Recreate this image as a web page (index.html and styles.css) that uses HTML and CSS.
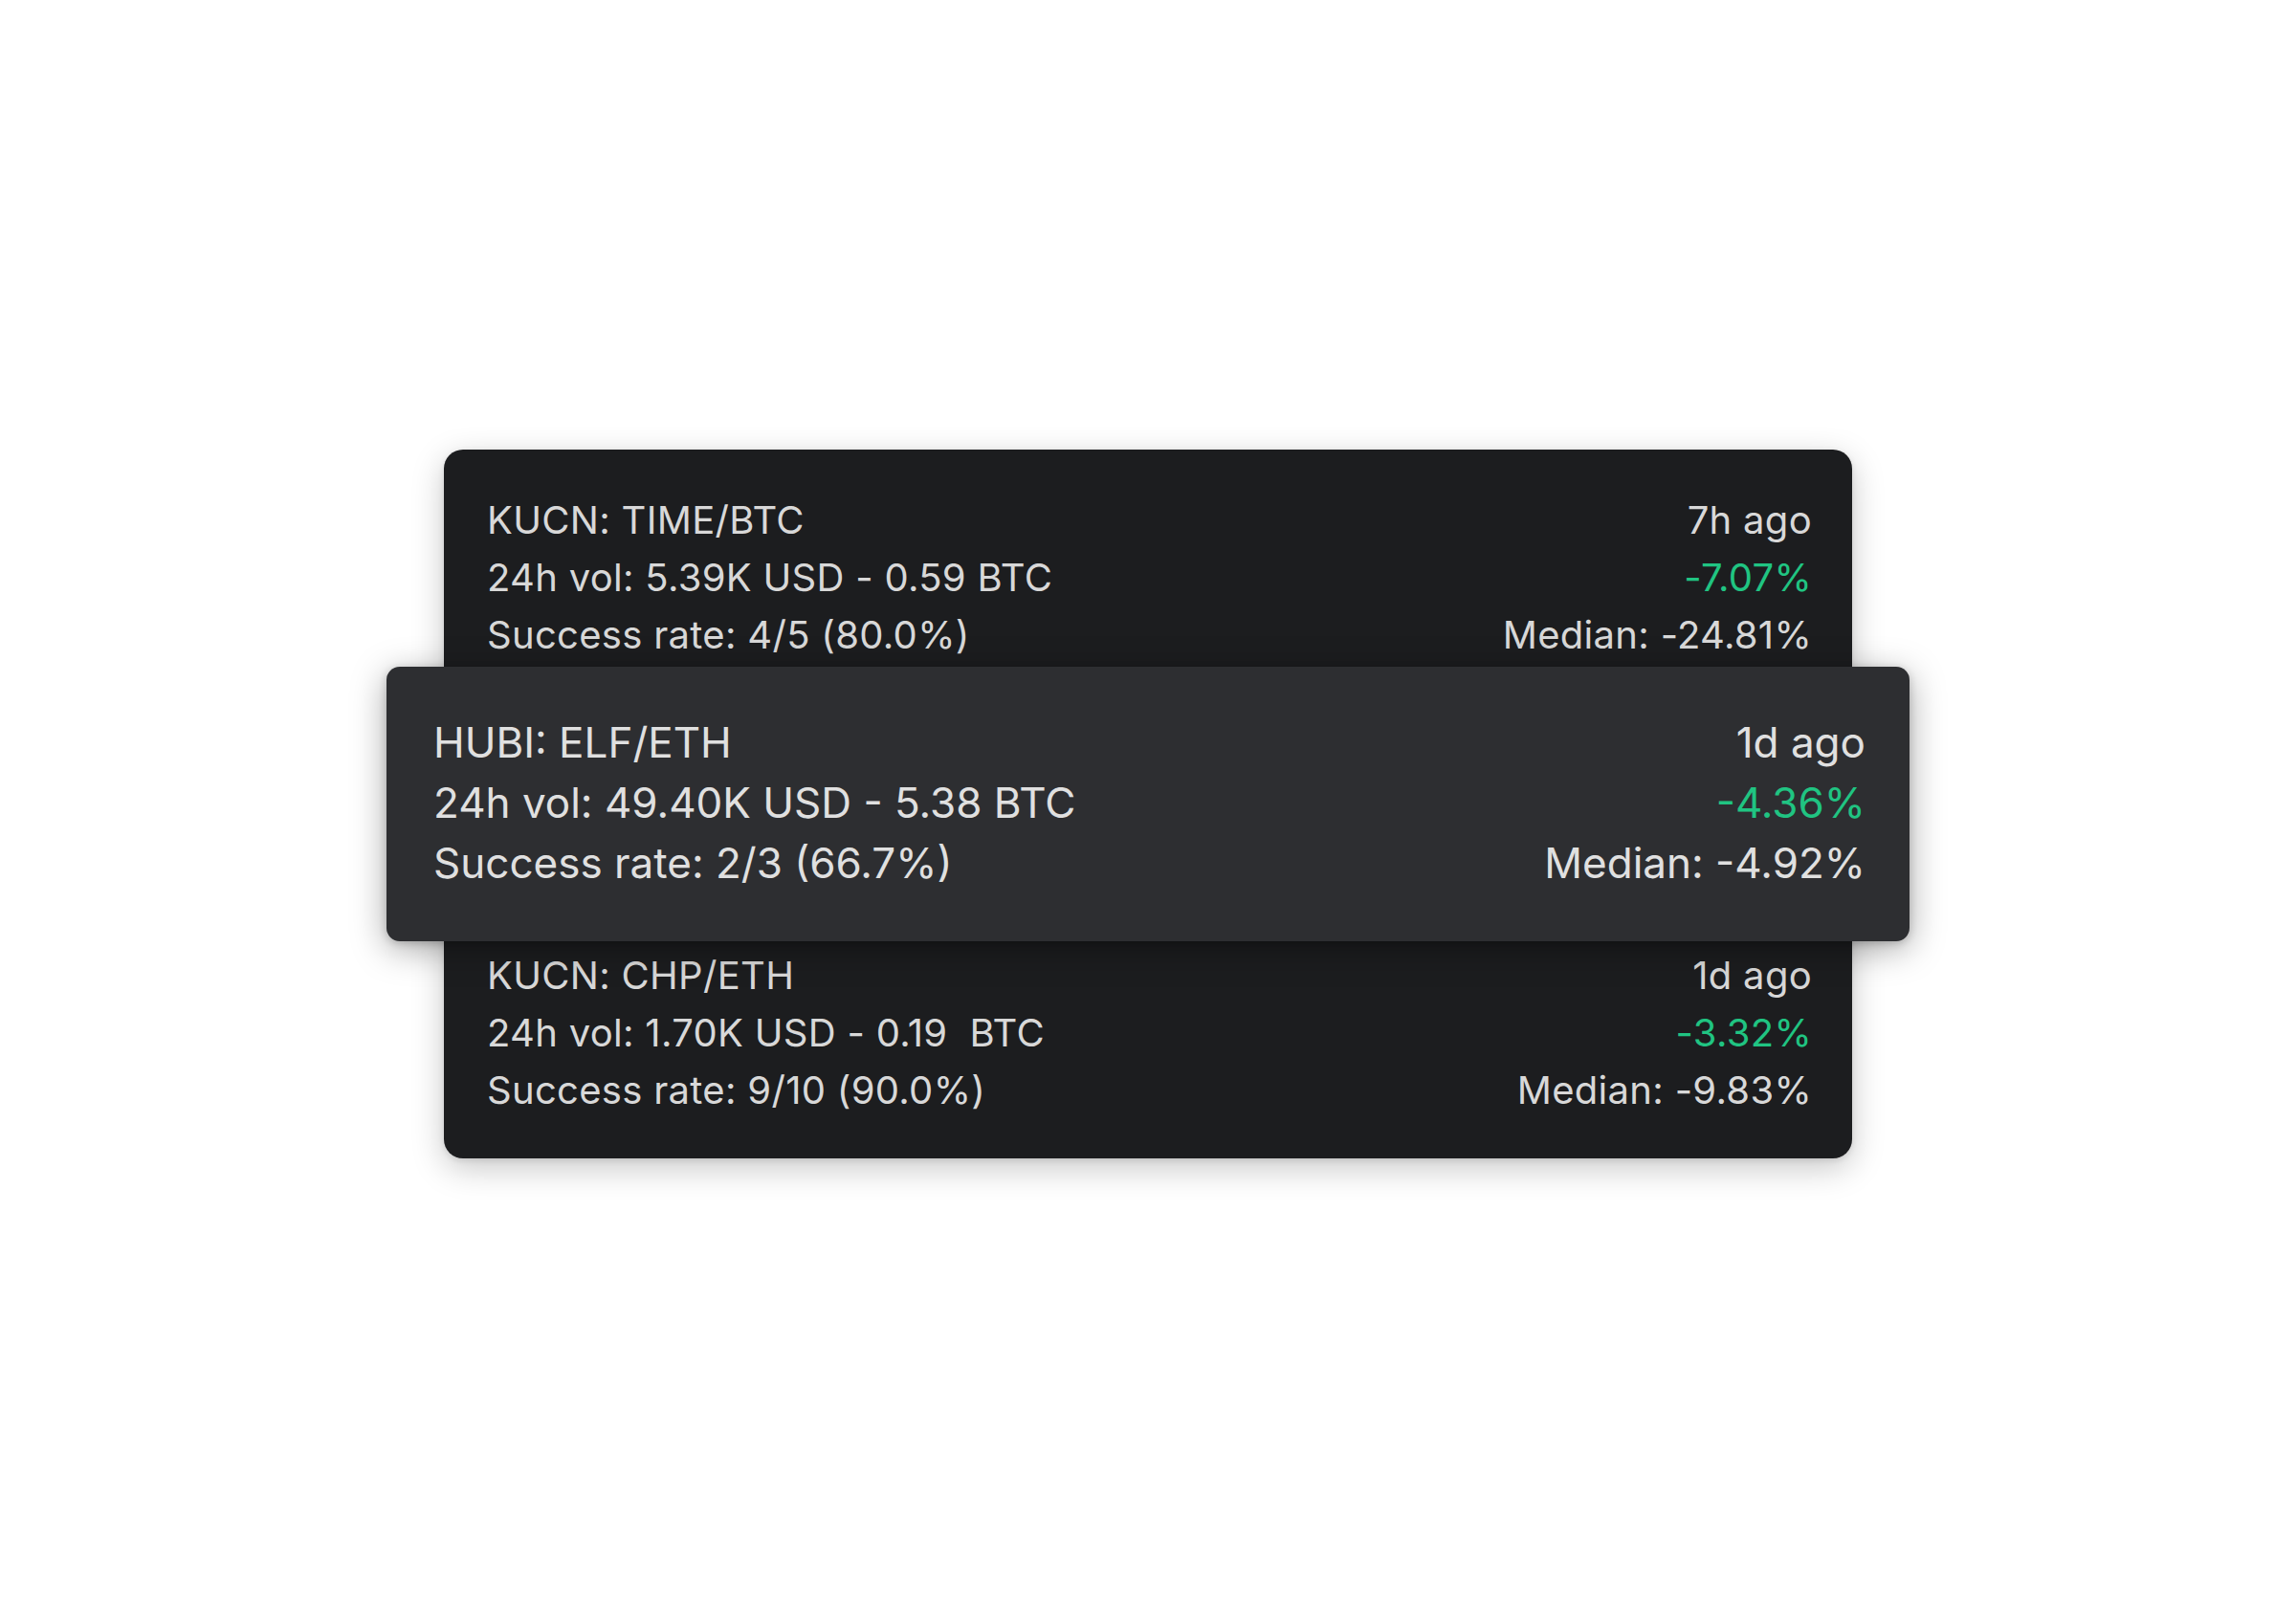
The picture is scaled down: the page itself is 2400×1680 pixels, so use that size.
FILE: index.html
```html
<!DOCTYPE html>
<html lang="en">
<head>
<meta charset="utf-8">
<title>Signals</title>
<link rel="stylesheet" href="styles.css">
</head>
<body>
<main class="stage">
  <section class="list">
    <article class="row">
      <div class="col">
        <div class="line">KUCN: TIME/BTC</div>
        <div class="line">24h vol: 5.39K USD - 0.59 BTC</div>
        <div class="line">Success rate: 4/5 (80.0%)</div>
      </div>
      <div class="col col-right">
        <div class="line">7h ago</div>
        <div class="line green">-7.07%</div>
        <div class="line">Median: -24.81%</div>
      </div>
    </article>
    <article class="row row-active">
      <div class="col">
        <div class="line">HUBI: ELF/ETH</div>
        <div class="line">24h vol: 49.40K USD - 5.38 BTC</div>
        <div class="line">Success rate: 2/3 (66.7%)</div>
      </div>
      <div class="col col-right">
        <div class="line">1d ago</div>
        <div class="line green">-4.36%</div>
        <div class="line">Median: -4.92%</div>
      </div>
    </article>
    <article class="row row-last">
      <div class="col">
        <div class="line">KUCN: CHP/ETH</div>
        <div class="line">24h vol: 1.70K USD - 0.19&nbsp; BTC</div>
        <div class="line">Success rate: 9/10 (90.0%)</div>
      </div>
      <div class="col col-right">
        <div class="line">1d ago</div>
        <div class="line green">-3.32%</div>
        <div class="line">Median: -9.83%</div>
      </div>
    </article>
  </section>
</main>
</body>
</html>
```
FILE: styles.css
```css
* { box-sizing: border-box; }
html, body { margin: 0; padding: 0; background: #ffffff; }
body {
  font-family: Inter, "Noto Sans", "Liberation Sans", sans-serif;
  -webkit-font-smoothing: antialiased;
}
.stage {
  width: 100vw;
  height: 100vh;
  display: flex;
  align-items: center;
  justify-content: center;
}
.list {
  width: 1472px;
  background: #1c1d1f;
  border-radius: 20px;
  box-shadow: 0 10px 34px rgba(0, 0, 0, 0.22), 0 2px 6px rgba(0, 0, 0, 0.10);
  display: flex;
  flex-direction: column;
  color: #d8d8d8;
}
.row {
  display: flex;
  justify-content: space-between;
  padding: 44px 42px 3px 45px;
  font-size: 40px;
  line-height: 60px;
  letter-spacing: 0.3px;
}
.row-last {
  padding: 6px 42px 41px 45px;
}
.row-active {
  margin: 0 -60px;
  padding: 48px 46px 50px 49px;
  background: #2d2e31;
  border-radius: 14px;
  font-size: 44px;
  line-height: 63px;
  letter-spacing: 0px;
  color: #e0e0e0;
  box-shadow: 0 8px 36px rgba(0, 0, 0, 0.35), 0 2px 8px rgba(0, 0, 0, 0.18);
  position: relative;
  z-index: 1;
}
.col { display: flex; flex-direction: column; }
.col-right { text-align: right; align-items: flex-end; }
.line { white-space: nowrap; }
.green { color: #20c482; }
```
